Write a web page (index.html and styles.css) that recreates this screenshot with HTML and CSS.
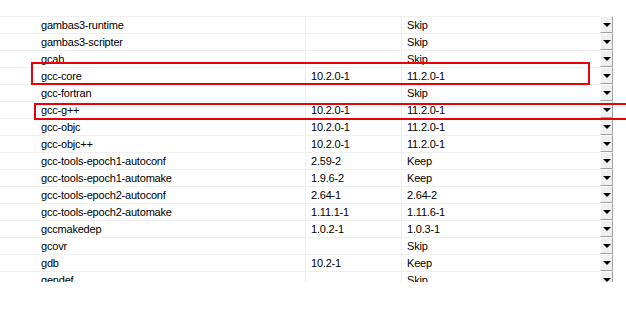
FILE: index.html
```html
<!DOCTYPE html>
<html>
<head>
	<title>packages</title>
	<meta charset="utf-8">
	<link rel="stylesheet" href="styles.css">
</head>
<body>
	<div class="page">
		<div class="grid">
			<div class="row"><div class="name">gambas3-runtime</div><div class="cur"></div><div class="new">Skip</div><div class="btn"><i></i></div></div>
			<div class="row"><div class="name">gambas3-scripter</div><div class="cur"></div><div class="new">Skip</div><div class="btn"><i></i></div></div>
			<div class="row"><div class="name">gcab</div><div class="cur"></div><div class="new">Skip</div><div class="btn"><i></i></div></div>
			<div class="row"><div class="name">gcc-core</div><div class="cur">10.2.0-1</div><div class="new">11.2.0-1</div><div class="btn"><i></i></div></div>
			<div class="row"><div class="name">gcc-fortran</div><div class="cur"></div><div class="new">Skip</div><div class="btn"><i></i></div></div>
			<div class="row"><div class="name">gcc-g++</div><div class="cur">10.2.0-1</div><div class="new">11.2.0-1</div><div class="btn"><i></i></div></div>
			<div class="row"><div class="name">gcc-objc</div><div class="cur">10.2.0-1</div><div class="new">11.2.0-1</div><div class="btn"><i></i></div></div>
			<div class="row"><div class="name">gcc-objc++</div><div class="cur">10.2.0-1</div><div class="new">11.2.0-1</div><div class="btn"><i></i></div></div>
			<div class="row"><div class="name">gcc-tools-epoch1-autoconf</div><div class="cur">2.59-2</div><div class="new">Keep</div><div class="btn"><i></i></div></div>
			<div class="row"><div class="name">gcc-tools-epoch1-automake</div><div class="cur">1.9.6-2</div><div class="new">Keep</div><div class="btn"><i></i></div></div>
			<div class="row"><div class="name">gcc-tools-epoch2-autoconf</div><div class="cur">2.64-1</div><div class="new">2.64-2</div><div class="btn"><i></i></div></div>
			<div class="row"><div class="name">gcc-tools-epoch2-automake</div><div class="cur">1.11.1-1</div><div class="new">1.11.6-1</div><div class="btn"><i></i></div></div>
			<div class="row"><div class="name">gccmakedep</div><div class="cur">1.0.2-1</div><div class="new">1.0.3-1</div><div class="btn"><i></i></div></div>
			<div class="row"><div class="name">gcovr</div><div class="cur"></div><div class="new">Skip</div><div class="btn"><i></i></div></div>
			<div class="row"><div class="name">gdb</div><div class="cur">10.2-1</div><div class="new">Keep</div><div class="btn"><i></i></div></div>
			<div class="row"><div class="name">gendef</div><div class="cur"></div><div class="new">Skip</div><div class="btn"><i></i></div></div>
		</div>
		<div class="mark mark-core"></div>
		<div class="mark mark-gpp"></div>
	</div>
</body>
</html>
```

FILE: styles.css
```css
*{
	padding: 0px;
	margin: 0px;
	box-sizing: border-box;
}
body{
	background: #fff;
	font-family: "Liberation Sans", Arial, sans-serif;
	font-size: 11px;
	letter-spacing: -0.2px;
	color: #000;
	overflow: hidden;
}
.page{
	position: relative;
	width: 626px;
	height: 309px;
	overflow: hidden;
}
.grid{
	margin-top: 16px;
	width: 613px;
	height: 266px;
	overflow: hidden;
}
.row{
	display: grid;
	grid-template-columns: 306px 96px 198px 13px;
	height: 17px;
}
.row>div{
	border-top: 1px solid #f0f0f0;
	line-height: 16px;
	white-space: nowrap;
	overflow: hidden;
}
.name{
	padding-left: 41px;
	border-right: 1px solid #f0f0f0;
}
.cur{
	padding-left: 5px;
	border-right: 1px solid #f0f0f0;
}
.new{
	padding-left: 5px;
}
.row>.btn{
	border-top: 1px solid #fff;
	border-left: 1px solid #fff;
	border-right: 1px solid #a0a0a0;
	border-bottom: 1px solid #a0a0a0;
	background: #f0f0f0;
	display: flex;
	align-items: center;
	justify-content: center;
}
.btn i{
	width: 0;
	height: 0;
	border-left: 4px solid transparent;
	border-right: 4px solid transparent;
	border-top: 4px solid #000;
	margin-top: 1px;
}
.mark{
	position: absolute;
	border: 2px solid #e8000b;
}
.mark-core{
	left: 31px;
	top: 62px;
	width: 559px;
	height: 23px;
}
.mark-gpp{
	left: 34px;
	top: 103px;
	right: 0;
	height: 17px;
	border-right: none;
}
```
